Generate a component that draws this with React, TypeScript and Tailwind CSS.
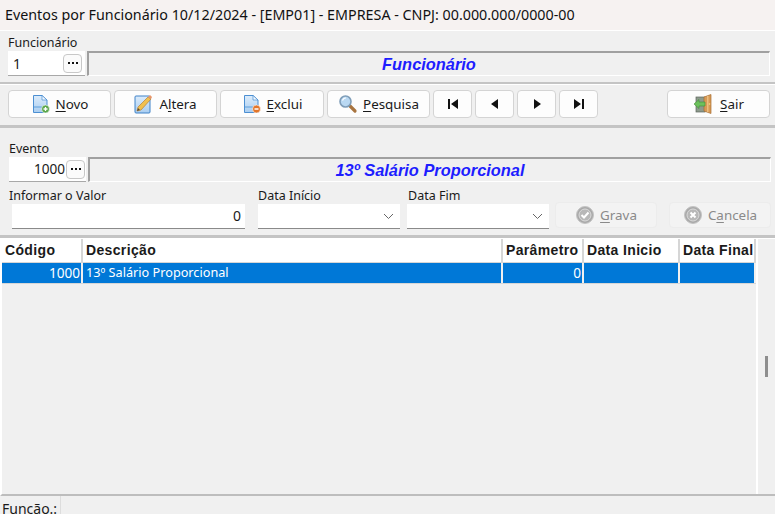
import React from "react";

const font = { fontFamily: '"Noto Sans", "Liberation Sans", sans-serif' };

function DocIcon({ badge }: { badge: "plus" | "minus" | "pencil" }) {
  return (
    <svg width="20" height="20" viewBox="0 0 20 20" className="shrink-0">
      <defs>
        <linearGradient id={"d" + badge} x1="0" y1="0" x2="0" y2="1">
          <stop offset="0" stopColor="#dcecfb" />
          <stop offset="1" stopColor="#a9cdf0" />
        </linearGradient>
      </defs>
      {badge === "pencil" ? (
        <>
          <rect x="1" y="2" width="15" height="17" rx="1" fill="url(#dpencil)" stroke="#3f82c8" />
          <path d="M3 17 L4 13 L14 3 L17 5 L7 16 Z" fill="#f1c04f" stroke="#b5813a" strokeWidth="0.7" />
          <path d="M14 3 L17 5 L18 3 L16 1 Z" fill="#e8956a" />
          <path d="M3 17 L4 14 L6 16 Z" fill="#5b4a35" />
        </>
      ) : (
        <>
          <path d="M2.5 1.5 H11 L16 6 V18.5 H2.5 Z" fill={"url(#d" + badge + ")"} stroke="#4c8fd2" />
          <path d="M11 1.5 V6 H16 Z" fill="#f4f9fe" stroke="#4c8fd2" strokeWidth="0.7" />
          <path d="M3 13 H12" stroke="#5ea0dc" />
          <circle cx="14.5" cy="15" r="4" fill={badge === "plus" ? "#5aa64a" : "#e2752a"} stroke="#fff" strokeWidth="0.6" />
          {badge === "plus" ? (
            <path d="M12.5 15 H16.5 M14.5 13 V17" stroke="#fff" strokeWidth="1.3" />
          ) : (
            <path d="M12.5 15 H16.5" stroke="#fff" strokeWidth="1.5" />
          )}
        </>
      )}
    </svg>
  );
}

function SearchIcon() {
  return (
    <svg width="20" height="20" viewBox="0 0 20 20" className="shrink-0">
      <path d="M11.5 11.5 L17 17" stroke="#a8743f" strokeWidth="3.2" strokeLinecap="round" />
      <circle cx="7.5" cy="7.5" r="5.5" fill="#b9d8f2" stroke="#7f9db8" strokeWidth="1.6" />
      <path d="M4.5 6.5 A3.5 3.5 0 0 1 8 4" stroke="#fff" strokeWidth="1.2" fill="none" />
    </svg>
  );
}

function DoorIcon() {
  return (
    <svg width="22" height="20" viewBox="0 0 22 20" className="shrink-0">
      <rect x="3" y="3" width="9" height="15" fill="#8d9a8c" stroke="#5d665c" strokeWidth="0.7" />
      <path d="M11 3 L18 0.5 V19.5 L11 17 Z" fill="#d79a55" stroke="#a86f33" strokeWidth="0.7" />
      <rect x="14" y="2" width="1.5" height="16" fill="#ecbd80" />
      <circle cx="16.5" cy="10" r="0.8" fill="#f6e08a" />
      <path d="M1 10 L6 5.5 V8 H12 V12 H6 V14.5 Z" fill="#6cc05c" stroke="#3f8d37" strokeWidth="0.6" />
    </svg>
  );
}

function CircleIcon({ kind }: { kind: "check" | "x" }) {
  return (
    <svg width="20" height="20" viewBox="0 0 20 20" className="shrink-0">
      <circle cx="10" cy="10" r="8.5" fill="#a9a9a9" stroke="#c4c4c4" />
      <circle cx="10" cy="10" r="6" fill="#b8b8b8" stroke="#dadada" />
      {kind === "check" ? (
        <path d="M6.5 10 L9 12.5 L13.5 7.5" stroke="#fff" strokeWidth="2" fill="none" />
      ) : (
        <path d="M7.5 7.5 L12.5 12.5 M12.5 7.5 L7.5 12.5" stroke="#fff" strokeWidth="2" fill="none" />
      )}
    </svg>
  );
}

function Btn({
  icon,
  letter,
  rest,
  w,
  disabled,
  prefix,
}: {
  icon: React.ReactNode;
  letter: string;
  rest: string;
  w: string;
  disabled?: boolean;
  prefix?: string;
}) {
  return (
    <div
      className={`${w} flex items-center justify-center gap-[5px] rounded-[4px] border text-[13.4px] ${
        disabled ? "h-[26px] bg-[#f3f3f3] border-[#ececec] text-[#8a8a8a]" : "h-[28px] bg-[#fdfdfd] border-[#d4d4d4] text-[#1a1a1a]"
      }`}
    >
      {icon}
      <span>
        {prefix}
        <span className="underline underline-offset-2">{letter}</span>
        {rest}
      </span>
    </div>
  );
}

function NavBtn({ d }: { d: string }) {
  return (
    <div className="w-[39px] h-[28px] flex items-center justify-center rounded-[4px] border border-[#d4d4d4] bg-[#fdfdfd]">
      <svg width="12" height="10" viewBox="0 0 12 10">
        <path d={d} fill="#111" />
      </svg>
    </div>
  );
}

function Dots() {
  return (
    <div className="w-[19px] h-[19px] rounded-[4px] border border-[#c8c8c8] bg-[#fbfbfb] flex items-center justify-center gap-[2px] shrink-0">
      <span className="w-[2px] h-[2px] bg-[#111]" />
      <span className="w-[2px] h-[2px] bg-[#111]" />
      <span className="w-[2px] h-[2px] bg-[#111]" />
    </div>
  );
}

function Banner({ text }: { text: string }) {
  return (
    <div className="flex-1 h-[25px] border-t-2 border-l-2 border-[#a0a0a0] border-b border-r border-b-white border-r-white bg-[#f0f0f0] flex items-center justify-center">
      <span className="text-[16.4px] font-bold italic text-[#1d1dff] leading-none" style={{ fontFamily: '"Liberation Sans", sans-serif' }}>
        {text}
      </span>
    </div>
  );
}

function SelectBox({ w }: { w: string }) {
  return (
    <div className={`${w} h-[25px] bg-white border-b border-[#8a8a8a] flex items-center justify-end pr-[6px]`}>
      <svg width="11" height="7" viewBox="0 0 11 7">
        <path d="M1 1 L5.5 5.5 L10 1" stroke="#666" fill="none" />
      </svg>
    </div>
  );
}

function Cell({
  w,
  children,
  right,
  head,
}: {
  w: string;
  children?: React.ReactNode;
  right?: boolean;
  head?: boolean;
}) {
  return (
    <div
      className={`${w} shrink-0 h-full flex items-center whitespace-nowrap overflow-hidden pl-[3px] pr-[1px] border-r-2 ${head ? "border-[#d6d6d6]" : "border-[#f0f0f0]"} ${
        right ? "justify-end" : ""
      }`}
    >
      {children}
    </div>
  );
}

export default function App() {
  return (
    <div className="w-[775px] h-[514px] overflow-hidden bg-[#f0f0f0] flex flex-col text-[#1a1a1a]" style={font}>
      <div className="h-[30px] shrink-0 bg-[#f6f2f1] flex items-center pl-[5px] text-[14.3px] text-[#111] whitespace-nowrap">
        Eventos por Funcionário 10/12/2024 - [EMP01] - EMPRESA - CNPJ: 00.000.000/0000-00
      </div>

      <div className="h-[54px] shrink-0 border-b-2 border-[#c4c4c4] pl-[8px] pr-[5px] flex flex-col border-t border-t-white">
        <div className="text-[12.5px] leading-[17px] h-[20px] pt-[3px]">Funcionário</div>
        <div className="flex items-center gap-[2px]">
          <div className="w-[77px] h-[25px] bg-white border-b border-[#a8a8a8] flex items-center justify-between pl-[5px] pr-[3px] text-[14px]">
            1
            <Dots />
          </div>
          <Banner text="Funcionário" />
        </div>
      </div>

      <div className="h-[44px] shrink-0 border-b-[3px] border-[#c4c4c4] pl-[8px] pr-[5px] pt-[5px] flex gap-[3px] border-t border-t-white">
        <Btn w="w-[103px]" icon={<DocIcon badge="plus" />} letter="N" rest="ovo" />
        <Btn w="w-[103px]" icon={<DocIcon badge="pencil" />} prefix="A" letter="l" rest="tera" />
        <Btn w="w-[104px]" icon={<DocIcon badge="minus" />} letter="E" rest="xclui" />
        <Btn w="w-[103px]" icon={<SearchIcon />} letter="P" rest="esquisa" />
        <NavBtn d="M1 0 H3 V10 H1 Z M11 0 V10 L4 5 Z" />
        <NavBtn d="M9 0 V10 L2 5 Z" />
        <NavBtn d="M3 0 V10 L10 5 Z" />
        <NavBtn d="M1 0 V10 L8 5 Z M9 0 H11 V10 H9 Z" />
        <div className="flex-1" />
        <Btn w="w-[103px]" icon={<DoorIcon />} letter="S" rest="air" />
      </div>

      <div className="h-[110px] shrink-0 border-b-[3px] border-[#c4c4c4] flex flex-col pl-[9px] pr-[4px]">
        <div className="text-[12.5px] leading-[17px] h-[29px] pt-[12px] flex items-end">Evento</div>
        <div className="flex items-center gap-[2px] h-[25px]">
          <div className="w-[77px] h-[25px] bg-white border-b border-[#a8a8a8] flex items-center justify-end pr-[1px] gap-[1px] text-[13.6px]">
            1000
            <Dots />
          </div>
          <Banner text="13º Salário Proporcional" />
        </div>
        <div className="flex mt-[5px] text-[12.5px] leading-[17px]">
          <div className="w-[249px]">Informar o Valor</div>
          <div className="w-[150px]">Data Início</div>
          <div>Data Fim</div>
        </div>
        <div className="flex items-start h-[25px] pl-[3px]">
          <div className="w-[233px] h-[25px] bg-white border-b border-[#8a8a8a] flex items-center justify-end pr-[4px] pb-[2px] text-[14px]">0</div>
          <div className="ml-[13px]">
            <SelectBox w="w-[142px]" />
          </div>
          <div className="ml-[7px]">
            <SelectBox w="w-[142px]" />
          </div>
          <div className="ml-[6px] -mt-[2px]">
            <Btn w="w-[102px]" disabled icon={<CircleIcon kind="check" />} letter="G" rest="rava" />
          </div>
          <div className="ml-[12px] -mt-[2px]">
            <Btn w="w-[102px]" disabled icon={<CircleIcon kind="x" />} prefix="C" letter="a" rest="ncela" />
          </div>
        </div>
      </div>

      <div className="flex-1 flex flex-col border-t border-t-white border-b-2 border-b-[#bdbdbd] relative border-l-2 border-l-white">
        <div className="w-[754px] h-[24px] shrink-0 flex bg-white text-[14px] font-bold border-b border-[#d6d6d6]" style={{ fontFamily: '"Liberation Sans", sans-serif', letterSpacing: "0.35px" }}>
          <Cell head w="w-[81px]">Código</Cell>
          <Cell head w="w-[420px]">Descrição</Cell>
          <Cell head w="w-[81px]">Parâmetro</Cell>
          <Cell head w="w-[96px]">Data Inicio</Cell>
          <Cell head w="w-[76px]">Data Final</Cell>
        </div>
        <div className="w-[754px] h-[21px] shrink-0 flex bg-[#0078d7] text-white text-[12.7px] border-b border-[#d6d6d6]">
          <Cell right w="w-[81px]"><span className="text-[13.6px]">1000</span></Cell>
          <Cell w="w-[420px]">13º Salário Proporcional</Cell>
          <Cell right w="w-[81px]"><span className="text-[13.6px]">0</span></Cell>
          <Cell w="w-[96px]" />
          <Cell w="w-[76px]" />
        </div>
        <div className="absolute left-[754px] top-0 bottom-0 w-[2px] bg-white" />
        <div className="absolute left-[763px] top-[117px] w-[3px] h-[21px] bg-[#8e8e8e]" />
      </div>

      <div className="flex-1 min-h-[18px] max-h-[18px] flex text-[14px] leading-none">
        <div className="w-[61px] pl-[2px] pt-[6px] border-r border-[#dddddd]">Função.:</div>
      </div>
    </div>
  );
}
